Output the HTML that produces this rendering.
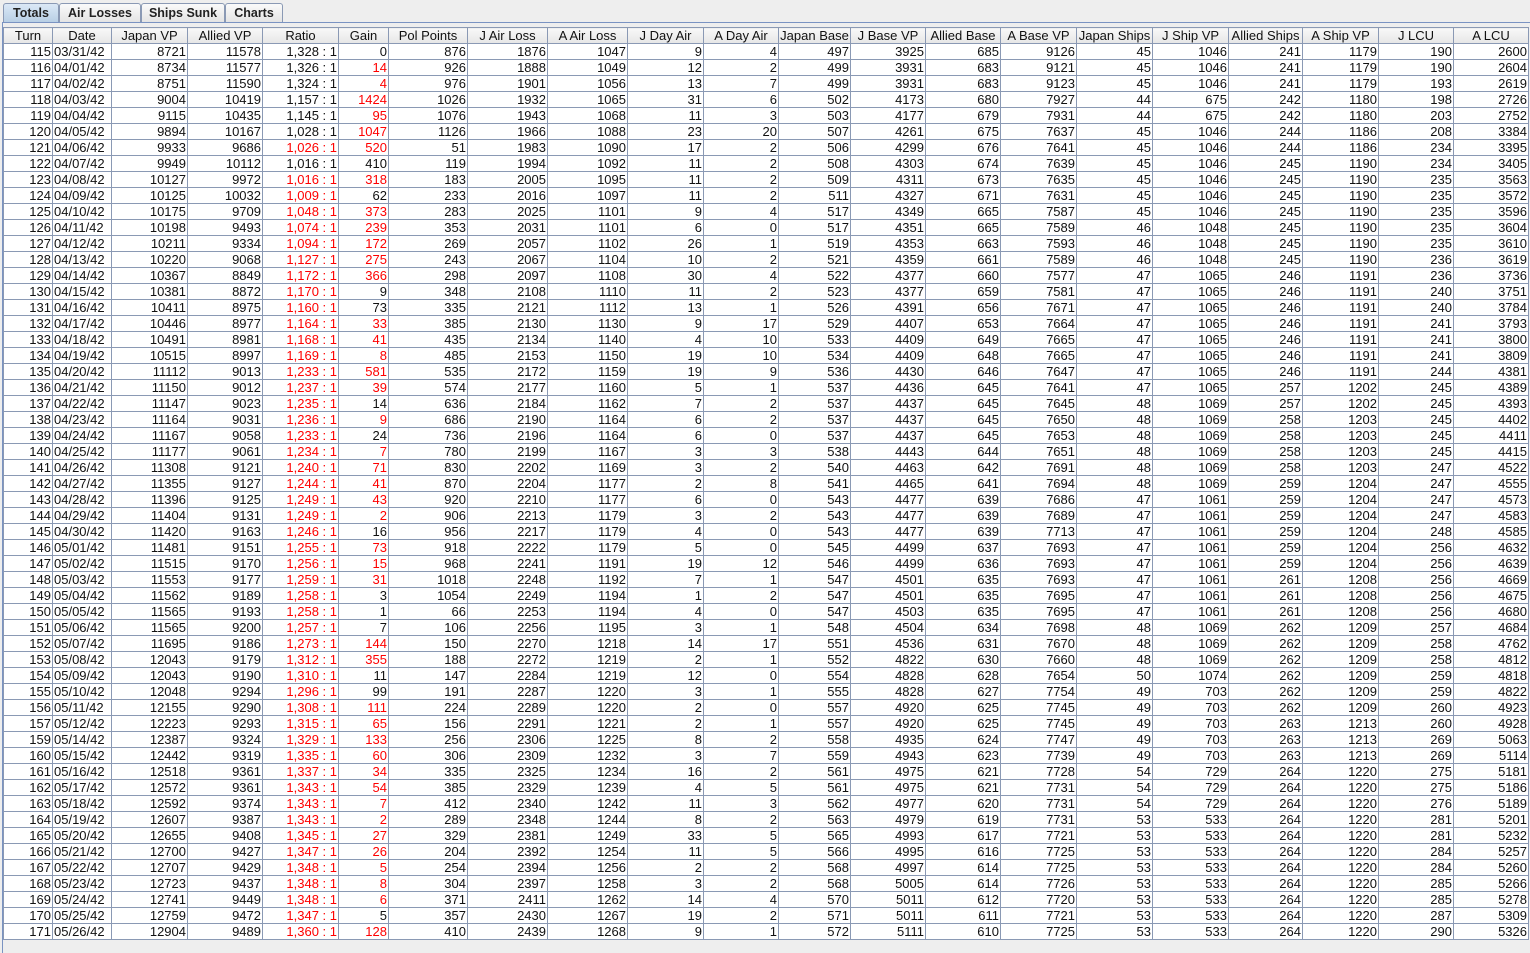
<!DOCTYPE html><html><head><meta charset="utf-8"><style>
body{margin:0;width:1530px;height:945px;background:#eeeeee;font-family:"Liberation Sans",sans-serif;overflow:hidden;position:relative}
.tab{position:absolute;top:3px;height:19px;border:1px solid #8a99b4;border-bottom:none;border-radius:3px 3px 0 0;background:linear-gradient(#fafafa,#e4e4e4);font-size:12.5px;font-weight:bold;color:#222;text-align:center;line-height:19px;box-sizing:border-box}
.sel{background:linear-gradient(#dbe8f6,#b8cfe5)}
.panel{position:absolute;left:2px;top:22px;width:1540px;height:930px;border-top:1px solid #7a93c2;border-left:1px solid #7a93c2;background:#eeeeee}
table{position:absolute;left:3px;top:27px;border-collapse:collapse;table-layout:fixed;font-size:13px;background:#fff}
td,th{border:1px solid #8a99b4;height:15px;padding:0 1px 0 0;line-height:15px;white-space:nowrap;overflow:hidden;text-align:right;color:#111}
th{font-weight:normal;text-align:center;background:linear-gradient(#f8f8f8,#e6e6e6);padding:0}
td:nth-child(2){text-align:left;padding-left:1px}
.r{color:#f00}
</style></head><body>
<div class="panel"></div>
<div class="tab sel" style="left:3px;width:56px">Totals</div>
<div class="tab" style="left:59px;width:82px">Air Losses</div>
<div class="tab" style="left:141px;width:84px">Ships Sunk</div>
<div class="tab" style="left:225px;width:58px">Charts</div>
<table>
<colgroup><col style="width:49px"><col style="width:59px"><col style="width:76px"><col style="width:75px"><col style="width:76px"><col style="width:50px"><col style="width:79px"><col style="width:80px"><col style="width:80px"><col style="width:76px"><col style="width:75px"><col style="width:72px"><col style="width:75px"><col style="width:75px"><col style="width:76px"><col style="width:76px"><col style="width:76px"><col style="width:74px"><col style="width:76px"><col style="width:75px"><col style="width:75px"></colgroup>
<tr><th>Turn</th><th>Date</th><th>Japan VP</th><th>Allied VP</th><th>Ratio</th><th>Gain</th><th>Pol Points</th><th>J Air Loss</th><th>A Air Loss</th><th>J Day Air</th><th>A Day Air</th><th>Japan Base</th><th>J Base VP</th><th>Allied Base</th><th>A Base VP</th><th>Japan Ships</th><th>J Ship VP</th><th>Allied Ships</th><th>A Ship VP</th><th>J LCU</th><th>A LCU</th></tr>
<tr><td>115</td><td>03/31/42</td><td>8721</td><td>11578</td><td>1,328 : 1</td><td>0</td><td>876</td><td>1876</td><td>1047</td><td>9</td><td>4</td><td>497</td><td>3925</td><td>685</td><td>9126</td><td>45</td><td>1046</td><td>241</td><td>1179</td><td>190</td><td>2600</td></tr>
<tr><td>116</td><td>04/01/42</td><td>8734</td><td>11577</td><td>1,326 : 1</td><td class="r">14</td><td>926</td><td>1888</td><td>1049</td><td>12</td><td>2</td><td>499</td><td>3931</td><td>683</td><td>9121</td><td>45</td><td>1046</td><td>241</td><td>1179</td><td>190</td><td>2604</td></tr>
<tr><td>117</td><td>04/02/42</td><td>8751</td><td>11590</td><td>1,324 : 1</td><td class="r">4</td><td>976</td><td>1901</td><td>1056</td><td>13</td><td>7</td><td>499</td><td>3931</td><td>683</td><td>9123</td><td>45</td><td>1046</td><td>241</td><td>1179</td><td>193</td><td>2619</td></tr>
<tr><td>118</td><td>04/03/42</td><td>9004</td><td>10419</td><td>1,157 : 1</td><td class="r">1424</td><td>1026</td><td>1932</td><td>1065</td><td>31</td><td>6</td><td>502</td><td>4173</td><td>680</td><td>7927</td><td>44</td><td>675</td><td>242</td><td>1180</td><td>198</td><td>2726</td></tr>
<tr><td>119</td><td>04/04/42</td><td>9115</td><td>10435</td><td>1,145 : 1</td><td class="r">95</td><td>1076</td><td>1943</td><td>1068</td><td>11</td><td>3</td><td>503</td><td>4177</td><td>679</td><td>7931</td><td>44</td><td>675</td><td>242</td><td>1180</td><td>203</td><td>2752</td></tr>
<tr><td>120</td><td>04/05/42</td><td>9894</td><td>10167</td><td>1,028 : 1</td><td class="r">1047</td><td>1126</td><td>1966</td><td>1088</td><td>23</td><td>20</td><td>507</td><td>4261</td><td>675</td><td>7637</td><td>45</td><td>1046</td><td>244</td><td>1186</td><td>208</td><td>3384</td></tr>
<tr><td>121</td><td>04/06/42</td><td>9933</td><td>9686</td><td class="r">1,026 : 1</td><td class="r">520</td><td>51</td><td>1983</td><td>1090</td><td>17</td><td>2</td><td>506</td><td>4299</td><td>676</td><td>7641</td><td>45</td><td>1046</td><td>244</td><td>1186</td><td>234</td><td>3395</td></tr>
<tr><td>122</td><td>04/07/42</td><td>9949</td><td>10112</td><td>1,016 : 1</td><td>410</td><td>119</td><td>1994</td><td>1092</td><td>11</td><td>2</td><td>508</td><td>4303</td><td>674</td><td>7639</td><td>45</td><td>1046</td><td>245</td><td>1190</td><td>234</td><td>3405</td></tr>
<tr><td>123</td><td>04/08/42</td><td>10127</td><td>9972</td><td class="r">1,016 : 1</td><td class="r">318</td><td>183</td><td>2005</td><td>1095</td><td>11</td><td>2</td><td>509</td><td>4311</td><td>673</td><td>7635</td><td>45</td><td>1046</td><td>245</td><td>1190</td><td>235</td><td>3563</td></tr>
<tr><td>124</td><td>04/09/42</td><td>10125</td><td>10032</td><td class="r">1,009 : 1</td><td>62</td><td>233</td><td>2016</td><td>1097</td><td>11</td><td>2</td><td>511</td><td>4327</td><td>671</td><td>7631</td><td>45</td><td>1046</td><td>245</td><td>1190</td><td>235</td><td>3572</td></tr>
<tr><td>125</td><td>04/10/42</td><td>10175</td><td>9709</td><td class="r">1,048 : 1</td><td class="r">373</td><td>283</td><td>2025</td><td>1101</td><td>9</td><td>4</td><td>517</td><td>4349</td><td>665</td><td>7587</td><td>45</td><td>1046</td><td>245</td><td>1190</td><td>235</td><td>3596</td></tr>
<tr><td>126</td><td>04/11/42</td><td>10198</td><td>9493</td><td class="r">1,074 : 1</td><td class="r">239</td><td>353</td><td>2031</td><td>1101</td><td>6</td><td>0</td><td>517</td><td>4351</td><td>665</td><td>7589</td><td>46</td><td>1048</td><td>245</td><td>1190</td><td>235</td><td>3604</td></tr>
<tr><td>127</td><td>04/12/42</td><td>10211</td><td>9334</td><td class="r">1,094 : 1</td><td class="r">172</td><td>269</td><td>2057</td><td>1102</td><td>26</td><td>1</td><td>519</td><td>4353</td><td>663</td><td>7593</td><td>46</td><td>1048</td><td>245</td><td>1190</td><td>235</td><td>3610</td></tr>
<tr><td>128</td><td>04/13/42</td><td>10220</td><td>9068</td><td class="r">1,127 : 1</td><td class="r">275</td><td>243</td><td>2067</td><td>1104</td><td>10</td><td>2</td><td>521</td><td>4359</td><td>661</td><td>7589</td><td>46</td><td>1048</td><td>245</td><td>1190</td><td>236</td><td>3619</td></tr>
<tr><td>129</td><td>04/14/42</td><td>10367</td><td>8849</td><td class="r">1,172 : 1</td><td class="r">366</td><td>298</td><td>2097</td><td>1108</td><td>30</td><td>4</td><td>522</td><td>4377</td><td>660</td><td>7577</td><td>47</td><td>1065</td><td>246</td><td>1191</td><td>236</td><td>3736</td></tr>
<tr><td>130</td><td>04/15/42</td><td>10381</td><td>8872</td><td class="r">1,170 : 1</td><td>9</td><td>348</td><td>2108</td><td>1110</td><td>11</td><td>2</td><td>523</td><td>4377</td><td>659</td><td>7581</td><td>47</td><td>1065</td><td>246</td><td>1191</td><td>240</td><td>3751</td></tr>
<tr><td>131</td><td>04/16/42</td><td>10411</td><td>8975</td><td class="r">1,160 : 1</td><td>73</td><td>335</td><td>2121</td><td>1112</td><td>13</td><td>1</td><td>526</td><td>4391</td><td>656</td><td>7671</td><td>47</td><td>1065</td><td>246</td><td>1191</td><td>240</td><td>3784</td></tr>
<tr><td>132</td><td>04/17/42</td><td>10446</td><td>8977</td><td class="r">1,164 : 1</td><td class="r">33</td><td>385</td><td>2130</td><td>1130</td><td>9</td><td>17</td><td>529</td><td>4407</td><td>653</td><td>7664</td><td>47</td><td>1065</td><td>246</td><td>1191</td><td>241</td><td>3793</td></tr>
<tr><td>133</td><td>04/18/42</td><td>10491</td><td>8981</td><td class="r">1,168 : 1</td><td class="r">41</td><td>435</td><td>2134</td><td>1140</td><td>4</td><td>10</td><td>533</td><td>4409</td><td>649</td><td>7665</td><td>47</td><td>1065</td><td>246</td><td>1191</td><td>241</td><td>3800</td></tr>
<tr><td>134</td><td>04/19/42</td><td>10515</td><td>8997</td><td class="r">1,169 : 1</td><td class="r">8</td><td>485</td><td>2153</td><td>1150</td><td>19</td><td>10</td><td>534</td><td>4409</td><td>648</td><td>7665</td><td>47</td><td>1065</td><td>246</td><td>1191</td><td>241</td><td>3809</td></tr>
<tr><td>135</td><td>04/20/42</td><td>11112</td><td>9013</td><td class="r">1,233 : 1</td><td class="r">581</td><td>535</td><td>2172</td><td>1159</td><td>19</td><td>9</td><td>536</td><td>4430</td><td>646</td><td>7647</td><td>47</td><td>1065</td><td>246</td><td>1191</td><td>244</td><td>4381</td></tr>
<tr><td>136</td><td>04/21/42</td><td>11150</td><td>9012</td><td class="r">1,237 : 1</td><td class="r">39</td><td>574</td><td>2177</td><td>1160</td><td>5</td><td>1</td><td>537</td><td>4436</td><td>645</td><td>7641</td><td>47</td><td>1065</td><td>257</td><td>1202</td><td>245</td><td>4389</td></tr>
<tr><td>137</td><td>04/22/42</td><td>11147</td><td>9023</td><td class="r">1,235 : 1</td><td>14</td><td>636</td><td>2184</td><td>1162</td><td>7</td><td>2</td><td>537</td><td>4437</td><td>645</td><td>7645</td><td>48</td><td>1069</td><td>257</td><td>1202</td><td>245</td><td>4393</td></tr>
<tr><td>138</td><td>04/23/42</td><td>11164</td><td>9031</td><td class="r">1,236 : 1</td><td class="r">9</td><td>686</td><td>2190</td><td>1164</td><td>6</td><td>2</td><td>537</td><td>4437</td><td>645</td><td>7650</td><td>48</td><td>1069</td><td>258</td><td>1203</td><td>245</td><td>4402</td></tr>
<tr><td>139</td><td>04/24/42</td><td>11167</td><td>9058</td><td class="r">1,233 : 1</td><td>24</td><td>736</td><td>2196</td><td>1164</td><td>6</td><td>0</td><td>537</td><td>4437</td><td>645</td><td>7653</td><td>48</td><td>1069</td><td>258</td><td>1203</td><td>245</td><td>4411</td></tr>
<tr><td>140</td><td>04/25/42</td><td>11177</td><td>9061</td><td class="r">1,234 : 1</td><td class="r">7</td><td>780</td><td>2199</td><td>1167</td><td>3</td><td>3</td><td>538</td><td>4443</td><td>644</td><td>7651</td><td>48</td><td>1069</td><td>258</td><td>1203</td><td>245</td><td>4415</td></tr>
<tr><td>141</td><td>04/26/42</td><td>11308</td><td>9121</td><td class="r">1,240 : 1</td><td class="r">71</td><td>830</td><td>2202</td><td>1169</td><td>3</td><td>2</td><td>540</td><td>4463</td><td>642</td><td>7691</td><td>48</td><td>1069</td><td>258</td><td>1203</td><td>247</td><td>4522</td></tr>
<tr><td>142</td><td>04/27/42</td><td>11355</td><td>9127</td><td class="r">1,244 : 1</td><td class="r">41</td><td>870</td><td>2204</td><td>1177</td><td>2</td><td>8</td><td>541</td><td>4465</td><td>641</td><td>7694</td><td>48</td><td>1069</td><td>259</td><td>1204</td><td>247</td><td>4555</td></tr>
<tr><td>143</td><td>04/28/42</td><td>11396</td><td>9125</td><td class="r">1,249 : 1</td><td class="r">43</td><td>920</td><td>2210</td><td>1177</td><td>6</td><td>0</td><td>543</td><td>4477</td><td>639</td><td>7686</td><td>47</td><td>1061</td><td>259</td><td>1204</td><td>247</td><td>4573</td></tr>
<tr><td>144</td><td>04/29/42</td><td>11404</td><td>9131</td><td class="r">1,249 : 1</td><td class="r">2</td><td>906</td><td>2213</td><td>1179</td><td>3</td><td>2</td><td>543</td><td>4477</td><td>639</td><td>7689</td><td>47</td><td>1061</td><td>259</td><td>1204</td><td>247</td><td>4583</td></tr>
<tr><td>145</td><td>04/30/42</td><td>11420</td><td>9163</td><td class="r">1,246 : 1</td><td>16</td><td>956</td><td>2217</td><td>1179</td><td>4</td><td>0</td><td>543</td><td>4477</td><td>639</td><td>7713</td><td>47</td><td>1061</td><td>259</td><td>1204</td><td>248</td><td>4585</td></tr>
<tr><td>146</td><td>05/01/42</td><td>11481</td><td>9151</td><td class="r">1,255 : 1</td><td class="r">73</td><td>918</td><td>2222</td><td>1179</td><td>5</td><td>0</td><td>545</td><td>4499</td><td>637</td><td>7693</td><td>47</td><td>1061</td><td>259</td><td>1204</td><td>256</td><td>4632</td></tr>
<tr><td>147</td><td>05/02/42</td><td>11515</td><td>9170</td><td class="r">1,256 : 1</td><td class="r">15</td><td>968</td><td>2241</td><td>1191</td><td>19</td><td>12</td><td>546</td><td>4499</td><td>636</td><td>7693</td><td>47</td><td>1061</td><td>259</td><td>1204</td><td>256</td><td>4639</td></tr>
<tr><td>148</td><td>05/03/42</td><td>11553</td><td>9177</td><td class="r">1,259 : 1</td><td class="r">31</td><td>1018</td><td>2248</td><td>1192</td><td>7</td><td>1</td><td>547</td><td>4501</td><td>635</td><td>7693</td><td>47</td><td>1061</td><td>261</td><td>1208</td><td>256</td><td>4669</td></tr>
<tr><td>149</td><td>05/04/42</td><td>11562</td><td>9189</td><td class="r">1,258 : 1</td><td>3</td><td>1054</td><td>2249</td><td>1194</td><td>1</td><td>2</td><td>547</td><td>4501</td><td>635</td><td>7695</td><td>47</td><td>1061</td><td>261</td><td>1208</td><td>256</td><td>4675</td></tr>
<tr><td>150</td><td>05/05/42</td><td>11565</td><td>9193</td><td class="r">1,258 : 1</td><td>1</td><td>66</td><td>2253</td><td>1194</td><td>4</td><td>0</td><td>547</td><td>4503</td><td>635</td><td>7695</td><td>47</td><td>1061</td><td>261</td><td>1208</td><td>256</td><td>4680</td></tr>
<tr><td>151</td><td>05/06/42</td><td>11565</td><td>9200</td><td class="r">1,257 : 1</td><td>7</td><td>106</td><td>2256</td><td>1195</td><td>3</td><td>1</td><td>548</td><td>4504</td><td>634</td><td>7698</td><td>48</td><td>1069</td><td>262</td><td>1209</td><td>257</td><td>4684</td></tr>
<tr><td>152</td><td>05/07/42</td><td>11695</td><td>9186</td><td class="r">1,273 : 1</td><td class="r">144</td><td>150</td><td>2270</td><td>1218</td><td>14</td><td>17</td><td>551</td><td>4536</td><td>631</td><td>7670</td><td>48</td><td>1069</td><td>262</td><td>1209</td><td>258</td><td>4762</td></tr>
<tr><td>153</td><td>05/08/42</td><td>12043</td><td>9179</td><td class="r">1,312 : 1</td><td class="r">355</td><td>188</td><td>2272</td><td>1219</td><td>2</td><td>1</td><td>552</td><td>4822</td><td>630</td><td>7660</td><td>48</td><td>1069</td><td>262</td><td>1209</td><td>258</td><td>4812</td></tr>
<tr><td>154</td><td>05/09/42</td><td>12043</td><td>9190</td><td class="r">1,310 : 1</td><td>11</td><td>147</td><td>2284</td><td>1219</td><td>12</td><td>0</td><td>554</td><td>4828</td><td>628</td><td>7654</td><td>50</td><td>1074</td><td>262</td><td>1209</td><td>259</td><td>4818</td></tr>
<tr><td>155</td><td>05/10/42</td><td>12048</td><td>9294</td><td class="r">1,296 : 1</td><td>99</td><td>191</td><td>2287</td><td>1220</td><td>3</td><td>1</td><td>555</td><td>4828</td><td>627</td><td>7754</td><td>49</td><td>703</td><td>262</td><td>1209</td><td>259</td><td>4822</td></tr>
<tr><td>156</td><td>05/11/42</td><td>12155</td><td>9290</td><td class="r">1,308 : 1</td><td class="r">111</td><td>224</td><td>2289</td><td>1220</td><td>2</td><td>0</td><td>557</td><td>4920</td><td>625</td><td>7745</td><td>49</td><td>703</td><td>262</td><td>1209</td><td>260</td><td>4923</td></tr>
<tr><td>157</td><td>05/12/42</td><td>12223</td><td>9293</td><td class="r">1,315 : 1</td><td class="r">65</td><td>156</td><td>2291</td><td>1221</td><td>2</td><td>1</td><td>557</td><td>4920</td><td>625</td><td>7745</td><td>49</td><td>703</td><td>263</td><td>1213</td><td>260</td><td>4928</td></tr>
<tr><td>159</td><td>05/14/42</td><td>12387</td><td>9324</td><td class="r">1,329 : 1</td><td class="r">133</td><td>256</td><td>2306</td><td>1225</td><td>8</td><td>2</td><td>558</td><td>4935</td><td>624</td><td>7747</td><td>49</td><td>703</td><td>263</td><td>1213</td><td>269</td><td>5063</td></tr>
<tr><td>160</td><td>05/15/42</td><td>12442</td><td>9319</td><td class="r">1,335 : 1</td><td class="r">60</td><td>306</td><td>2309</td><td>1232</td><td>3</td><td>7</td><td>559</td><td>4943</td><td>623</td><td>7739</td><td>49</td><td>703</td><td>263</td><td>1213</td><td>269</td><td>5114</td></tr>
<tr><td>161</td><td>05/16/42</td><td>12518</td><td>9361</td><td class="r">1,337 : 1</td><td class="r">34</td><td>335</td><td>2325</td><td>1234</td><td>16</td><td>2</td><td>561</td><td>4975</td><td>621</td><td>7728</td><td>54</td><td>729</td><td>264</td><td>1220</td><td>275</td><td>5181</td></tr>
<tr><td>162</td><td>05/17/42</td><td>12572</td><td>9361</td><td class="r">1,343 : 1</td><td class="r">54</td><td>385</td><td>2329</td><td>1239</td><td>4</td><td>5</td><td>561</td><td>4975</td><td>621</td><td>7731</td><td>54</td><td>729</td><td>264</td><td>1220</td><td>275</td><td>5186</td></tr>
<tr><td>163</td><td>05/18/42</td><td>12592</td><td>9374</td><td class="r">1,343 : 1</td><td class="r">7</td><td>412</td><td>2340</td><td>1242</td><td>11</td><td>3</td><td>562</td><td>4977</td><td>620</td><td>7731</td><td>54</td><td>729</td><td>264</td><td>1220</td><td>276</td><td>5189</td></tr>
<tr><td>164</td><td>05/19/42</td><td>12607</td><td>9387</td><td class="r">1,343 : 1</td><td class="r">2</td><td>289</td><td>2348</td><td>1244</td><td>8</td><td>2</td><td>563</td><td>4979</td><td>619</td><td>7731</td><td>53</td><td>533</td><td>264</td><td>1220</td><td>281</td><td>5201</td></tr>
<tr><td>165</td><td>05/20/42</td><td>12655</td><td>9408</td><td class="r">1,345 : 1</td><td class="r">27</td><td>329</td><td>2381</td><td>1249</td><td>33</td><td>5</td><td>565</td><td>4993</td><td>617</td><td>7721</td><td>53</td><td>533</td><td>264</td><td>1220</td><td>281</td><td>5232</td></tr>
<tr><td>166</td><td>05/21/42</td><td>12700</td><td>9427</td><td class="r">1,347 : 1</td><td class="r">26</td><td>204</td><td>2392</td><td>1254</td><td>11</td><td>5</td><td>566</td><td>4995</td><td>616</td><td>7725</td><td>53</td><td>533</td><td>264</td><td>1220</td><td>284</td><td>5257</td></tr>
<tr><td>167</td><td>05/22/42</td><td>12707</td><td>9429</td><td class="r">1,348 : 1</td><td class="r">5</td><td>254</td><td>2394</td><td>1256</td><td>2</td><td>2</td><td>568</td><td>4997</td><td>614</td><td>7725</td><td>53</td><td>533</td><td>264</td><td>1220</td><td>284</td><td>5260</td></tr>
<tr><td>168</td><td>05/23/42</td><td>12723</td><td>9437</td><td class="r">1,348 : 1</td><td class="r">8</td><td>304</td><td>2397</td><td>1258</td><td>3</td><td>2</td><td>568</td><td>5005</td><td>614</td><td>7726</td><td>53</td><td>533</td><td>264</td><td>1220</td><td>285</td><td>5266</td></tr>
<tr><td>169</td><td>05/24/42</td><td>12741</td><td>9449</td><td class="r">1,348 : 1</td><td class="r">6</td><td>371</td><td>2411</td><td>1262</td><td>14</td><td>4</td><td>570</td><td>5011</td><td>612</td><td>7720</td><td>53</td><td>533</td><td>264</td><td>1220</td><td>285</td><td>5278</td></tr>
<tr><td>170</td><td>05/25/42</td><td>12759</td><td>9472</td><td class="r">1,347 : 1</td><td>5</td><td>357</td><td>2430</td><td>1267</td><td>19</td><td>2</td><td>571</td><td>5011</td><td>611</td><td>7721</td><td>53</td><td>533</td><td>264</td><td>1220</td><td>287</td><td>5309</td></tr>
<tr><td>171</td><td>05/26/42</td><td>12904</td><td>9489</td><td class="r">1,360 : 1</td><td class="r">128</td><td>410</td><td>2439</td><td>1268</td><td>9</td><td>1</td><td>572</td><td>5111</td><td>610</td><td>7725</td><td>53</td><td>533</td><td>264</td><td>1220</td><td>290</td><td>5326</td></tr>
</table>
</body></html>
